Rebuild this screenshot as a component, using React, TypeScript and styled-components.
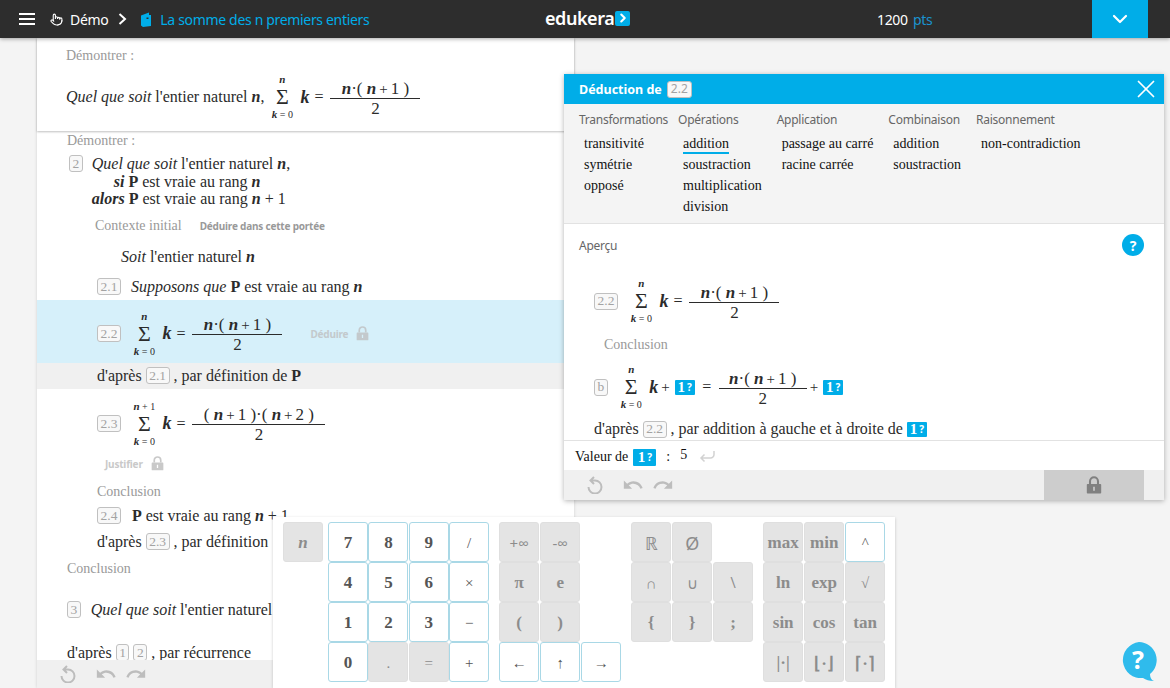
import { ReactNode } from "react";
import styled, { createGlobalStyle } from "styled-components";
import { ChevronDown, ChevronRight, Pointer, X } from "lucide-react";
import { MdRedo, MdUndo } from "react-icons/md";

const BLUE = "#00ade8";
const SERIF = '"Liberation Serif", "Times New Roman", serif';
const SANS = '"Noto Sans", "Open Sans", sans-serif';

const GlobalStyle = createGlobalStyle`
  html, body {
    margin: 0;
    height: 100%;
    overflow: hidden;
    background: #f4f4f4;
  }
  * { box-sizing: border-box; }
`;

const Sum = ({ top = <b>n</b> }: { top?: ReactNode }) => (
  <SumBox>
    <Limit>{top}</Limit>
    <SumSign>Σ</SumSign>
    <Limit>
      <b>k</b> = 0
    </Limit>
  </SumBox>
);

const SumFormula = ({ left }: { left?: number }) => (
  <Formula $left={left}>
    <Sum />
    <BigVar>k</BigVar>
    <Equals>=</Equals>
    <Fraction $width={90}>
      <Numer>
        <b>n</b>·( <b>n</b>
        <small>+</small>1 )
      </Numer>
      <Denom>2</Denom>
    </Fraction>
  </Formula>
);

const LockIcon = ({ color, size }: { color: string; size: number }) => (
  <svg width={size} height={size * 1.15} viewBox="0 0 20 23">
    <path d="M5 10V6.500a5 5 0 0 1 10 0V10" fill="none" stroke={color} strokeWidth="2.600" />
    <path
      fillRule="evenodd"
      fill={color}
      d="M2 10h16a1 1 0 0 1 1 1v10a1 1 0 0 1-1 1H2a1 1 0 0 1-1-1V11a1 1 0 0 1 1-1zM9 13.500v5h2v-5z"
    />
  </svg>
);

const HistoryIcons = () => (
  <>
    <svg width="16" height="18" viewBox="0 0 16 18">
      <path
        d="M1.500 11a6.500 6.500 0 1 0 6.500-6.500H4.500M7 1 3.500 4.500 7 8"
        fill="none"
        stroke="#bdbdbd"
        strokeWidth="2"
      />
    </svg>
    <UndoIcon size={22} color="#bdbdbd" />
    <RedoIcon size={22} color="#bdbdbd" />
  </>
);

const keyGroups: { cols: number; keys: (string | null)[]; active?: string[] }[] = [
  { cols: 1, keys: ["n"] },
  {
    cols: 4,
    keys: ["7", "8", "9", "/", "4", "5", "6", "×", "1", "2", "3", "−", "0", ".", "=", "+"],
    active: ["7", "8", "9", "/", "4", "5", "6", "×", "1", "2", "3", "−", "0", "+"],
  },
  {
    cols: 3,
    keys: ["+∞", "-∞", null, "π", "e", null, "(", ")", null, "←", "↑", "→"],
    active: ["←", "↑", "→"],
  },
  { cols: 3, keys: ["ℝ", "Ø", null, "∩", "∪", "\\", "{", "}", ";", null, null, null] },
  {
    cols: 3,
    keys: ["max", "min", "^", "ln", "exp", "√", "sin", "cos", "tan", "|·|", "⌊·⌋", "⌈·⌉"],
    active: ["^"],
  },
];

const thinKeys = ["+∞", "-∞", "∩", "∪", "/", "×", "−", "+", ".", "=", "←", "↑", "→", "^", "√", "ℝ", "Ø"];

const keySize = (key: string) => {
  if (key === "ℝ" || key === "Ø") return 18;
  return thinKeys.includes(key) ? 15 : 17;
};

const menus = [
  { title: "Transformations", items: ["transitivité", "symétrie", "opposé"] },
  { title: "Opérations", items: ["addition", "soustraction", "multiplication", "division"] },
  { title: "Application", items: ["passage au carré", "racine carrée"] },
  { title: "Combinaison", items: ["addition", "soustraction"] },
  { title: "Raisonnement", items: ["non-contradiction"] },
];

const App = () => {
  return (
    <Page>
      <GlobalStyle />
      <TopBar>
        <BarLeft>
          <Burger>
            <span />
            <span />
            <span />
          </Burger>
          <Pointer size={13} color="#fff" strokeWidth={2} />
          <BarLabel>Démo</BarLabel>
          <BarChevron width="9" height="12" viewBox="0 0 9 12">
            <path d="M1.500 1 7 6l-5.500 5" fill="none" stroke="#fff" strokeWidth="2" />
          </BarChevron>
          <svg width="12" height="15" viewBox="0 0 12 15">
            <path d="M1 3.500 9 0.500V3h2v11l-8 1-2-1.500z" fill={BLUE} />
            <path d="M6.500 5.500h2v1.500h-2z" fill="#2d2d2d" />
          </svg>
          <BarTitle>La somme des n premiers entiers</BarTitle>
        </BarLeft>
        <Logo>
          edukera
          <LogoMark>
            <ChevronRight size={14} color="#fff" strokeWidth={3.500} />
          </LogoMark>
        </Logo>
        <Points>
          1200 <span>pts</span>
        </Points>
        <MenuButton>
          <ChevronDown size={24} color="#fff" strokeWidth={2.200} />
        </MenuButton>
      </TopBar>

      <Column>
        <StickyGoal>
          <GoalLabel>Démontrer :</GoalLabel>
          <GoalLine>
            <span>
              <i>Quel que soit</i> l'entier naturel <BI>n</BI>,
            </span>
            <SumFormula left={7} />
          </GoalLine>
        </StickyGoal>

        <Scroll>
          <Row $height={20} $left={30}>
            <Muted>Démontrer :</Muted>
          </Row>
          <Statement>
            <Badge>2</Badge>
            <div>
              <div>
                <i>Quel que soit</i> l'entier naturel <BI>n</BI>,
              </div>
              <SiLine>
                <BI>si</BI> <b>P</b> est vraie au rang <BI>n</BI>
              </SiLine>
              <div>
                <BI>alors</BI> <b>P</b> est vraie au rang <BI>n</BI> + 1
              </div>
            </div>
          </Statement>
          <Row $height={20} $left={58} $top={8}>
            <Muted>Contexte initial</Muted>
            <SmallAction $left={18} $color="#999">
              Déduire dans cette portée
            </SmallAction>
          </Row>
          <Row $height={20} $left={84} $top={11}>
            <span>
              <i>Soit</i> l'entier naturel <BI>n</BI>
            </span>
          </Row>
          <Row $height={20} $left={60} $top={10}>
            <Badge>2.1</Badge>
            <Text $left={10}>
              <i>Supposons que</i> <b>P</b> est vraie au rang <BI>n</BI>
            </Text>
          </Row>
          <Row $height={63} $left={60} $top={3} $bg="#d6f0fa" $shift={5}>
            <Badge>2.2</Badge>
            <SumFormula />
            <SmallAction $left={28} $color="#c3c9cc">
              Déduire
            </SmallAction>
            <LockSlot $left={8}>
              <LockIcon color="#c3c9cc" size={13} />
            </LockSlot>
          </Row>
          <Row $height={26} $left={60} $bg="#f0f0f0">
            d'après&nbsp;<Badge>2.1</Badge>&nbsp;, par définition de&nbsp;<b>P</b>
          </Row>
          <Row $height={65} $left={60} $shift={5}>
            <Badge>2.3</Badge>
            <Formula>
              <Sum
                top={
                  <>
                    <b>n</b> + 1
                  </>
                }
              />
              <BigVar>k</BigVar>
              <Equals>=</Equals>
              <Fraction $width={133}>
                <Numer>
                  ( <b>n</b>
                  <small>+</small>1 )·( <b>n</b>
                  <small>+</small>2 )
                </Numer>
                <Denom>2</Denom>
              </Fraction>
            </Formula>
          </Row>
          <Row $height={20} $left={68}>
            <SmallAction $left={0} $color="#c9c9c9">
              Justifier
            </SmallAction>
            <LockSlot $left={8}>
              <LockIcon color="#c9c9c9" size={13} />
            </LockSlot>
          </Row>
          <Row $height={20} $left={60} $top={8}>
            <Muted>Conclusion</Muted>
          </Row>
          <Row $height={20} $left={60} $top={4}>
            <Badge>2.4</Badge>
            <Text $left={11}>
              <b>P</b> est vraie au rang <BI>n</BI> + 1
            </Text>
          </Row>
          <Row $height={20} $left={60} $top={6}>
            d'après&nbsp;<Badge>2.3</Badge>&nbsp;, par définition
          </Row>
          <Row $height={20} $left={30} $top={7}>
            <Muted>Conclusion</Muted>
          </Row>
          <Row $height={20} $left={30} $top={21}>
            <Badge>3</Badge>
            <Text $left={10}>
              <i>Quel que soit</i> l'entier naturel
            </Text>
          </Row>
          <Row $height={20} $left={30} $top={23}>
            d'après&nbsp;<Badge>1</Badge>&nbsp;<Badge>2</Badge>&nbsp;, par récurrence
          </Row>
        </Scroll>

        <ColumnFooter>
          <HistoryIcons />
        </ColumnFooter>
      </Column>

      <DeductionPanel>
        <PanelHeader>
          Déduction de <HeaderBadge>2.2</HeaderBadge>
          <CloseSlot>
            <X size={30} color="#fff" strokeWidth={1.400} />
          </CloseSlot>
        </PanelHeader>
        <Menus>
          {menus.map((menu) => (
            <MenuColumn key={menu.title}>
              <MenuTitle>{menu.title}</MenuTitle>
              {menu.items.map((item) => (
                <MenuItem key={item}>
                  <MenuLabel $selected={menu.title === "Opérations" && item === "addition"}>
                    {item}
                  </MenuLabel>
                </MenuItem>
              ))}
            </MenuColumn>
          ))}
        </Menus>
        <Preview>
          <PreviewTitle>
            Aperçu
            <HelpDot>?</HelpDot>
          </PreviewTitle>
          <Row $height={64} $left={30} $top={13}>
            <Badge>2.2</Badge>
            <SumFormula />
          </Row>
          <Row $height={20} $left={40} $top={2}>
            <Muted>Conclusion</Muted>
          </Row>
          <Row $height={44} $left={30} $top={10}>
            <Badge>b</Badge>
            <Formula>
              <Sum />
              <BigVar>k</BigVar>
              <Plus>+</Plus>
              <Blank>
                1<small>?</small>
              </Blank>
              <Equals $gap={7.500}>=</Equals>
              <Fraction $width={88}>
                <Numer>
                  <b>n</b>·( <b>n</b>
                  <small>+</small>1 )
                </Numer>
                <Denom>2</Denom>
              </Fraction>
              <Plus>+</Plus>
              <Blank>
                1<small>?</small>
              </Blank>
            </Formula>
          </Row>
          <Row $height={20} $left={30} $top={10}>
            d'après&nbsp;<Badge>2.2</Badge>&nbsp;, par addition à gauche et à droite de&nbsp;
            <Blank>
              1<small>?</small>
            </Blank>
          </Row>
        </Preview>
        <ValueRow>
          <span>Valeur de</span>
          <Blank $wide>
            1<small>?</small>
          </Blank>
          <Colon>:</Colon>
          <ValueDigit>5</ValueDigit>
          <svg width="16" height="14" viewBox="0 0 16 14">
            <path
              d="M15 1v3.500a3.500 3.500 0 0 1-3.500 3.500H2M5.500 4.500 2 8l3.500 3.500"
              fill="none"
              stroke="#d2d2d2"
              strokeWidth="1.500"
            />
          </svg>
        </ValueRow>
        <PanelFooter>
          <HistoryGroup>
            <HistoryIcons />
          </HistoryGroup>
          <UnlockButton>
            <LockIcon color="#808080" size={16} />
          </UnlockButton>
        </PanelFooter>
      </DeductionPanel>

      <Keypad>
        {keyGroups.map((group, index) => (
          <KeyGrid key={index} $cols={group.cols} $index={index}>
            {group.keys.map((key, i) =>
              key === null ? (
                <span key={i} />
              ) : (
                <Key
                  key={i}
                  $active={!!group.active?.includes(key)}
                  $italic={key === "n"}
                  $thin={thinKeys.includes(key)}
                  $sans={["+∞", "-∞", "ℝ", "Ø", "∪", "∩"].includes(key)}
                  $size={keySize(key)}
                >
                  {key}
                </Key>
              )
            )}
          </KeyGrid>
        ))}
      </Keypad>

      <FloatingHelp>
        <svg width="38" height="48" viewBox="0 0 38 48">
          <path
            d="M19 1a18 18 0 0 1 11 32c0 3 1 6 4 7-5 0-8-1-11-3A18 18 0 1 1 19 1z"
            fill="#2fbbec"
          />
        </svg>
        <FloatingMark>?</FloatingMark>
      </FloatingHelp>
    </Page>
  );
};

export default App;

const Page = styled.div`
  position: relative;
  width: 1170px;
  height: 688px;
  overflow: hidden;
  background: #f4f4f4;
  font-family: ${SERIF};
  font-size: 16px;
  color: #2b2b2b;
`;

const TopBar = styled.header`
  position: relative;
  z-index: 3;
  display: flex;
  align-items: center;
  height: 38px;
  background: #2d2d2d;
  box-shadow: 0 1px 4px rgba(0, 0, 0, 0.35);
  font-family: ${SANS};
  font-size: 14px;
  letter-spacing: -0.33px;
  color: #fff;
`;

const BarLeft = styled.div`
  display: flex;
  align-items: center;
  gap: 10px;
  width: 545px;
  padding-left: 19px;
`;

const Burger = styled.div`
  display: flex;
  flex-direction: column;
  gap: 3px;
  width: 16px;
  margin-right: 5px;

  span {
    height: 2px;
    background: #fff;
  }
`;

const BarLabel = styled.span`
  margin-left: -3px;
`;

const BarChevron = styled.svg`
  margin-right: 3px;
`;

const BarTitle = styled.span`
  margin-left: -2px;
  color: ${BLUE};
`;

const Logo = styled.div`
  display: flex;
  align-items: center;
  gap: 1px;
  width: 332px;
  margin-top: -2px;
  font-size: 18px;
  font-weight: 600;
  letter-spacing: -0.45px;
`;

const LogoMark = styled.span`
  display: flex;
  align-items: center;
  justify-content: center;
  width: 15px;
  height: 15px;
  background: ${BLUE};
  border-radius: 2px;
`;

const Points = styled.div`
  width: 215px;

  span {
    margin-left: 2px;
    color: #1a93cf;
  }
`;

const MenuButton = styled.div`
  display: flex;
  align-items: center;
  justify-content: center;
  width: 56px;
  height: 38px;
  background: ${BLUE};
`;

const Column = styled.main`
  display: flex;
  flex-direction: column;
  width: 537px;
  height: 650px;
  margin-left: 37px;
  background: #fff;
  box-shadow: 0 0 3px rgba(0, 0, 0, 0.15);
`;

const StickyGoal = styled.div`
  position: relative;
  z-index: 1;
  height: 93px;
  padding: 9px 29px 0;
  background: #fff;
  box-shadow: 0 1px 2px rgba(0, 0, 0, 0.25);
`;

const GoalLabel = styled.div`
  font-size: 14px;
  line-height: 18px;
  color: #999;
`;

const GoalLine = styled.div`
  display: flex;
  align-items: center;
  height: 44px;
  margin-top: 10px;
`;

const Scroll = styled.div`
  flex: 1;
  min-height: 0;
  overflow: hidden;
`;

const Row = styled.div<{ $height: number; $left: number; $top?: number; $bg?: string; $shift?: number }>`
  display: flex;
  align-items: center;
  height: ${({ $height }) => $height}px;
  margin-top: ${({ $top }) => $top ?? 0}px;
  padding-left: ${({ $left }) => $left}px;
  padding-top: ${({ $shift }) => $shift ?? 0}px;
  background: ${({ $bg }) => $bg ?? "transparent"};
  white-space: pre-wrap;
`;

const Statement = styled.div`
  display: flex;
  align-items: flex-start;
  gap: 9px;
  margin-top: 4px;
  padding-left: 32px;
  line-height: 17.5px;
`;

const SiLine = styled.div`
  padding-left: 22px;
`;

const BI = styled.b`
  font-style: italic;
`;

const Muted = styled.span`
  font-size: 14px;
  color: #999;
`;

const Text = styled.span<{ $left: number }>`
  margin-left: ${({ $left }) => $left}px;
`;

const SmallAction = styled.span<{ $left: number; $color: string }>`
  margin-left: ${({ $left }) => $left}px;
  font-family: ${SANS};
  font-size: 10px;
  font-weight: 700;
  letter-spacing: -0.2px;
  color: ${({ $color }) => $color};
`;

const LockSlot = styled.span<{ $left: number }>`
  display: flex;
  margin-left: ${({ $left }) => $left}px;
`;

const Badge = styled.span`
  display: inline-flex;
  align-items: center;
  justify-content: center;
  flex: none;
  min-width: 13px;
  height: 17px;
  padding: 0 2.500px;
  border: 1px solid #c0c0c0;
  border-radius: 3px;
  background: #f8f8f8;
  font-size: 13.500px;
  color: #a3a3a3;
  line-height: 1;
`;

const HeaderBadge = styled(Badge)`
  margin-left: 5px;
  padding: 0 3px;
  font-family: ${SANS};
  font-weight: 400;
  font-size: 12px;
`;

const Formula = styled.span<{ $left?: number }>`
  display: inline-flex;
  align-items: center;
  margin-left: ${({ $left }) => $left ?? 12.500}px;
`;

const SumBox = styled.span`
  display: inline-flex;
  flex-direction: column;
  align-items: center;
  justify-content: space-between;
  width: 22px;
  height: 46px;
  line-height: 1;
`;

const Limit = styled.span`
  font-size: 10px;
  line-height: 11px;
  white-space: nowrap;

  b {
    font-size: 11px;
    font-style: italic;
  }
`;

const SumSign = styled.span`
  font-size: 22px;
  line-height: 18px;
`;

const BigVar = styled.b`
  margin-left: 7px;
  font-size: 18px;
  font-style: italic;
`;

const Equals = styled.span<{ $gap?: number }>`
  margin: 0 ${({ $gap }) => $gap ?? 7}px 0 ${({ $gap }) => $gap ?? 5}px;
`;

const Plus = styled.span`
  margin: 0 5px 0 3px;
  font-size: 15px;
`;

const Fraction = styled.span<{ $width: number }>`
  display: inline-flex;
  flex-direction: column;
  align-items: center;
  width: ${({ $width }) => $width}px;
  padding-top: 2px;
  font-size: 17px;
  line-height: 17px;
`;

const Numer = styled.span`
  width: 100%;
  border-bottom: 1px solid #2b2b2b;
  text-align: center;
  white-space: nowrap;

  b {
    font-style: italic;
  }

  small {
    margin: 0 3px;
    font-size: 15px;
  }
`;

const Denom = styled.span`
  padding-top: 1px;
`;

const Blank = styled.span<{ $wide?: boolean }>`
  display: inline-flex;
  align-items: center;
  justify-content: center;
  gap: 2px;
  width: ${({ $wide }) => ($wide ? 23 : 20)}px;
  height: ${({ $wide }) => ($wide ? 17 : 15)}px;
  border-radius: 1px;
  background: ${BLUE};
  color: #fff;
  font-weight: 700;
  font-size: 15px;

  small {
    font-family: ${SANS};
    font-size: 10px;
  }
`;

const ColumnFooter = styled.footer`
  display: flex;
  align-items: center;
  height: 28px;
  padding-left: 23px;
  background: #f0f0f0;
`;

const UndoIcon = styled(MdUndo)`
  margin-left: 19px;
`;

const RedoIcon = styled(MdRedo)`
  margin-left: 8px;
`;

const DeductionPanel = styled.section`
  position: absolute;
  top: 74px;
  left: 564px;
  z-index: 2;
  display: flex;
  flex-direction: column;
  width: 600px;
  height: 426px;
  background: #fff;
  box-shadow: 0 1px 5px rgba(0, 0, 0, 0.3);
`;

const PanelHeader = styled.div`
  display: flex;
  align-items: center;
  height: 30px;
  padding: 0 3px 0 15px;
  background: ${BLUE};
  font-family: ${SANS};
  font-size: 12.500px;
  font-weight: 700;
  color: #fff;
`;

const CloseSlot = styled.span`
  display: flex;
  margin-left: auto;
`;

const Menus = styled.nav`
  display: flex;
  gap: 10px;
  height: 120px;
  padding: 7px 0 0 15px;
  background: #f4f4f4;
  border-bottom: 1px solid #e2e2e2;
`;

const MenuColumn = styled.div`
  display: flex;
  flex-direction: column;
`;

const MenuTitle = styled.div`
  margin-bottom: 5px;
  font-family: ${SANS};
  font-size: 12px;
  line-height: 17px;
  letter-spacing: -0.25px;
  color: #666;
`;

const MenuItem = styled.div`
  height: 21px;
  padding: 0 5px;
  font-size: 14px;
  line-height: 21px;
  color: #111;
  white-space: nowrap;
`;

const MenuLabel = styled.span<{ $selected: boolean }>`
  display: inline-block;
  line-height: 17px;
  border-bottom: 2px solid ${({ $selected }) => ($selected ? BLUE : "transparent")};
`;

const Preview = styled.div`
  flex: 1;
  min-height: 0;
  overflow: hidden;
  border-bottom: 1px solid #e2e2e2;
`;

const PreviewTitle = styled.div`
  display: flex;
  align-items: center;
  justify-content: space-between;
  height: 22px;
  margin-top: 10px;
  padding: 0 20px 0 15px;
  font-family: ${SANS};
  font-size: 12px;
  letter-spacing: -0.25px;
  color: #666;
`;

const HelpDot = styled.span`
  display: flex;
  align-items: center;
  justify-content: center;
  width: 22px;
  height: 22px;
  border-radius: 50%;
  background: ${BLUE};
  color: #fff;
  font-size: 14px;
  font-weight: 700;
`;

const ValueRow = styled.div`
  display: flex;
  align-items: center;
  gap: 5px;
  height: 29px;
  padding: 3px 0 0 11px;
  font-size: 14px;
  color: #111;
`;

const Colon = styled.span`
  margin: 0 5px;
`;

const ValueDigit = styled.span`
  margin: -4px 7px 0 0;
`;

const PanelFooter = styled.div`
  display: flex;
  align-items: center;
  justify-content: space-between;
  height: 30px;
  padding: 0 20px 0 23px;
  background: #f0f0f0;
`;

const HistoryGroup = styled.div`
  display: flex;
  align-items: center;
`;

const UnlockButton = styled.div`
  display: flex;
  align-items: center;
  justify-content: center;
  width: 100px;
  height: 30px;
  background: #cdcdcd;
`;

const Keypad = styled.section`
  position: absolute;
  top: 517px;
  left: 273px;
  z-index: 2;
  display: flex;
  align-items: flex-start;
  width: 622px;
  height: 171px;
  padding: 5px 0 0 10px;
  background: #fff;
  box-shadow: 0 1px 3px rgba(0, 0, 0, 0.2);
`;

const KeyGrid = styled.div<{ $cols: number; $index: number }>`
  display: grid;
  grid-template-columns: repeat(${({ $cols }) => $cols}, 40px);
  grid-auto-rows: 40px;
  column-gap: ${({ $index }) => ($index === 1 ? 0.4 : 1)}px;
  margin-left: ${({ $index }) => ($index === 0 ? 0 : $index === 1 ? 5 : 10)}px;
`;

const Key = styled.div<{ $active: boolean; $italic: boolean; $thin: boolean; $sans: boolean; $size: number }>`
  display: flex;
  align-items: center;
  justify-content: center;
  padding-top: 2px;
  border: 1px solid ${({ $active }) => ($active ? "#a9d8e6" : "#dfdfdf")};
  border-radius: 3px;
  background: ${({ $active }) => ($active ? "#fff" : "#e4e4e4")};
  font-family: ${({ $sans }) => ($sans ? SANS : SERIF)};
  font-size: ${({ $size }) => $size}px;
  font-style: ${({ $italic }) => ($italic ? "italic" : "normal")};
  font-weight: ${({ $thin }) => ($thin ? 400 : 700)};
  color: ${({ $active }) => ($active ? "#555" : "#8c8c8c")};
`;

const FloatingHelp = styled.div`
  position: absolute;
  right: 12px;
  top: 641px;
  z-index: 2;
  width: 38px;
  height: 48px;
`;

const FloatingMark = styled.span`
  position: absolute;
  top: 1px;
  left: 0;
  width: 36px;
  text-align: center;
  font-family: ${SANS};
  font-size: 25px;
  font-weight: 700;
  color: #fff;
`;
